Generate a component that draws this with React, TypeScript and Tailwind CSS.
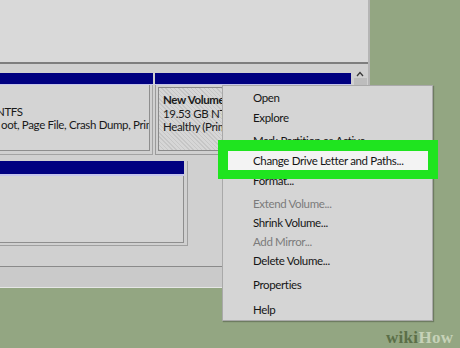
import React from 'react';

type MenuEntry =
  | { kind: 'item'; label: string; h: string; disabled?: boolean; active?: boolean }
  | { kind: 'sep'; h: string };

const menu: MenuEntry[] = [
  { kind: 'item', label: 'Open', h: 'h-[20px]' },
  { kind: 'item', label: 'Explore', h: 'h-[19px]' },
  { kind: 'sep', h: 'h-[4px]' },
  { kind: 'item', label: 'Mark Partition as Active', h: 'h-[20px]' },
  { kind: 'item', label: 'Change Drive Letter and Paths...', h: 'h-[20px]', active: true },
  { kind: 'item', label: 'Format...', h: 'h-[19px]' },
  { kind: 'sep', h: 'h-[4px]' },
  { kind: 'item', label: 'Extend Volume...', h: 'h-[19px]', disabled: true },
  { kind: 'item', label: 'Shrink Volume...', h: 'h-[19px]' },
  { kind: 'item', label: 'Add Mirror...', h: 'h-[19px]', disabled: true },
  { kind: 'item', label: 'Delete Volume...', h: 'h-[19px]' },
  { kind: 'sep', h: 'h-[5px]' },
  { kind: 'item', label: 'Properties', h: 'h-[20px]' },
  { kind: 'sep', h: 'h-[5px]' },
  { kind: 'item', label: 'Help', h: 'h-[20px]' },
];

const App = () => {
  return (
    <div className="relative w-[460px] h-[348px] overflow-hidden bg-[#93a682] font-['Lato',sans-serif] text-[11.5px] tracking-[-0.35px] text-[#1a1a1a]">
      {/* disk management window */}
      <div className="w-[370px] h-[288px] flex flex-col bg-[#d0d0d0] border-r-2 border-b border-r-[#b5b5b5] border-b-[#e6e6e6]">
        <div className="h-[64px] bg-[#d9d9d9] border-b-2 border-[#7e7e7e]" />

        <div className="flex-1 flex flex-col pt-[9px]">
          {/* first disk row */}
          <div className="flex h-[82px]">
            <div className="w-[153px] flex flex-col">
              <div className="h-[12px] bg-[#000080] border-b border-[#c4c4ec]" />
              <div className="flex-1 flex flex-col border-r border-b border-[#a3a3a3] pr-[2px] pb-[3px]">
                <div className="flex-1 bg-[#d4d4d4] border-r border-b border-[#8e8e8e] overflow-hidden pt-[6px] leading-[13.5px] whitespace-nowrap">
                  <div className="h-[13.5px]" />
                  <div className="ml-[-4px]">NTFS</div>
                  <div className="ml-[1px]">oot, Page File, Crash Dump, Primary Partition)</div>
                </div>
              </div>
            </div>

            <div className="ml-[2px] w-[196px] flex flex-col">
              <div className="h-[12px] bg-[#000080] border-b border-[#c4c4ec]" />
              <div className="flex-1 flex flex-col border-l border-b border-[#9a9a9a] p-[2px] pb-[3px]">
                <div className="flex-1 border border-[#8a8a8a] bg-[repeating-linear-gradient(45deg,#c6c6c6_0px,#c6c6c6_1px,#d6d6d6_1px,#d6d6d6_3px)] pt-[5px] pl-[4px] leading-[13.5px] whitespace-nowrap">
                  <div className="font-bold">New Volume (E:)</div>
                  <div>19.53 GB NTFS</div>
                  <div>Healthy (Primary Partition)</div>
                </div>
              </div>
            </div>

            <div className="ml-auto w-[14px] flex flex-col items-center mr-[1px]">
              <svg width="10" height="8" viewBox="0 0 10 8" className="mt-[-3px]">
                <path d="M2 6 L5 2.5 L8 6" fill="none" stroke="#3a3a3a" strokeWidth="1.3" />
              </svg>
              <div className="w-[13px] h-[7px] bg-[#bdbdbd]" />
            </div>
          </div>

          {/* second disk row */}
          <div className="flex h-[85px] mt-[6px]">
            <div className="w-[188px] flex flex-col border-r border-b border-[#a0a0a0] pr-[3px] pb-[2px]">
              <div className="h-[15px] bg-[#000080] border-b-2 border-[#c4c4ec]" />
              <div className="flex-1 bg-[#d4d4d4] border-r border-b border-[#8e8e8e]" />
            </div>
          </div>

          <div className="mt-auto h-[21px] bg-[#cacaca] border-t border-[#8a8a8a]" />
        </div>
      </div>

      {/* context menu */}
      <div className="absolute left-[222px] top-[85px] w-[211px] h-[236px] bg-[#d5d5d5] border border-[#a9a9a9] shadow-[1px_1px_1px_rgba(0,0,0,0.25)] pt-[2px] px-[1px] flex flex-col">
        {menu.map((m, i) =>
          m.kind === 'sep' ? (
            <div key={i} className={m.h} />
          ) : (
            <div
              key={i}
              className={`${m.h} flex items-center pl-[29px] whitespace-nowrap ${
                m.active ? 'bg-[#f3f3f3]' : ''
              } ${m.disabled ? 'text-[#7b7b7b]' : 'text-[#151515]'}`}
            >
              {m.label}
            </div>
          )
        )}
      </div>

      {/* highlight box */}
      <div className="absolute left-[218px] top-[140px] w-[220px] h-[39px] border-t-[11px] border-x-[10px] border-b-[9px] border-[#1fe41f]" />

      {/* watermark */}
      <div className="absolute left-[386px] top-[328px] font-['Liberation_Serif',serif] font-bold text-[17px] leading-[20px] tracking-[0.3px]">
        <span className="text-[#5b6f48]">wiki</span>
        <span className="text-[#c6d2b8]">How</span>
      </div>
    </div>
  );
};

export default App;
